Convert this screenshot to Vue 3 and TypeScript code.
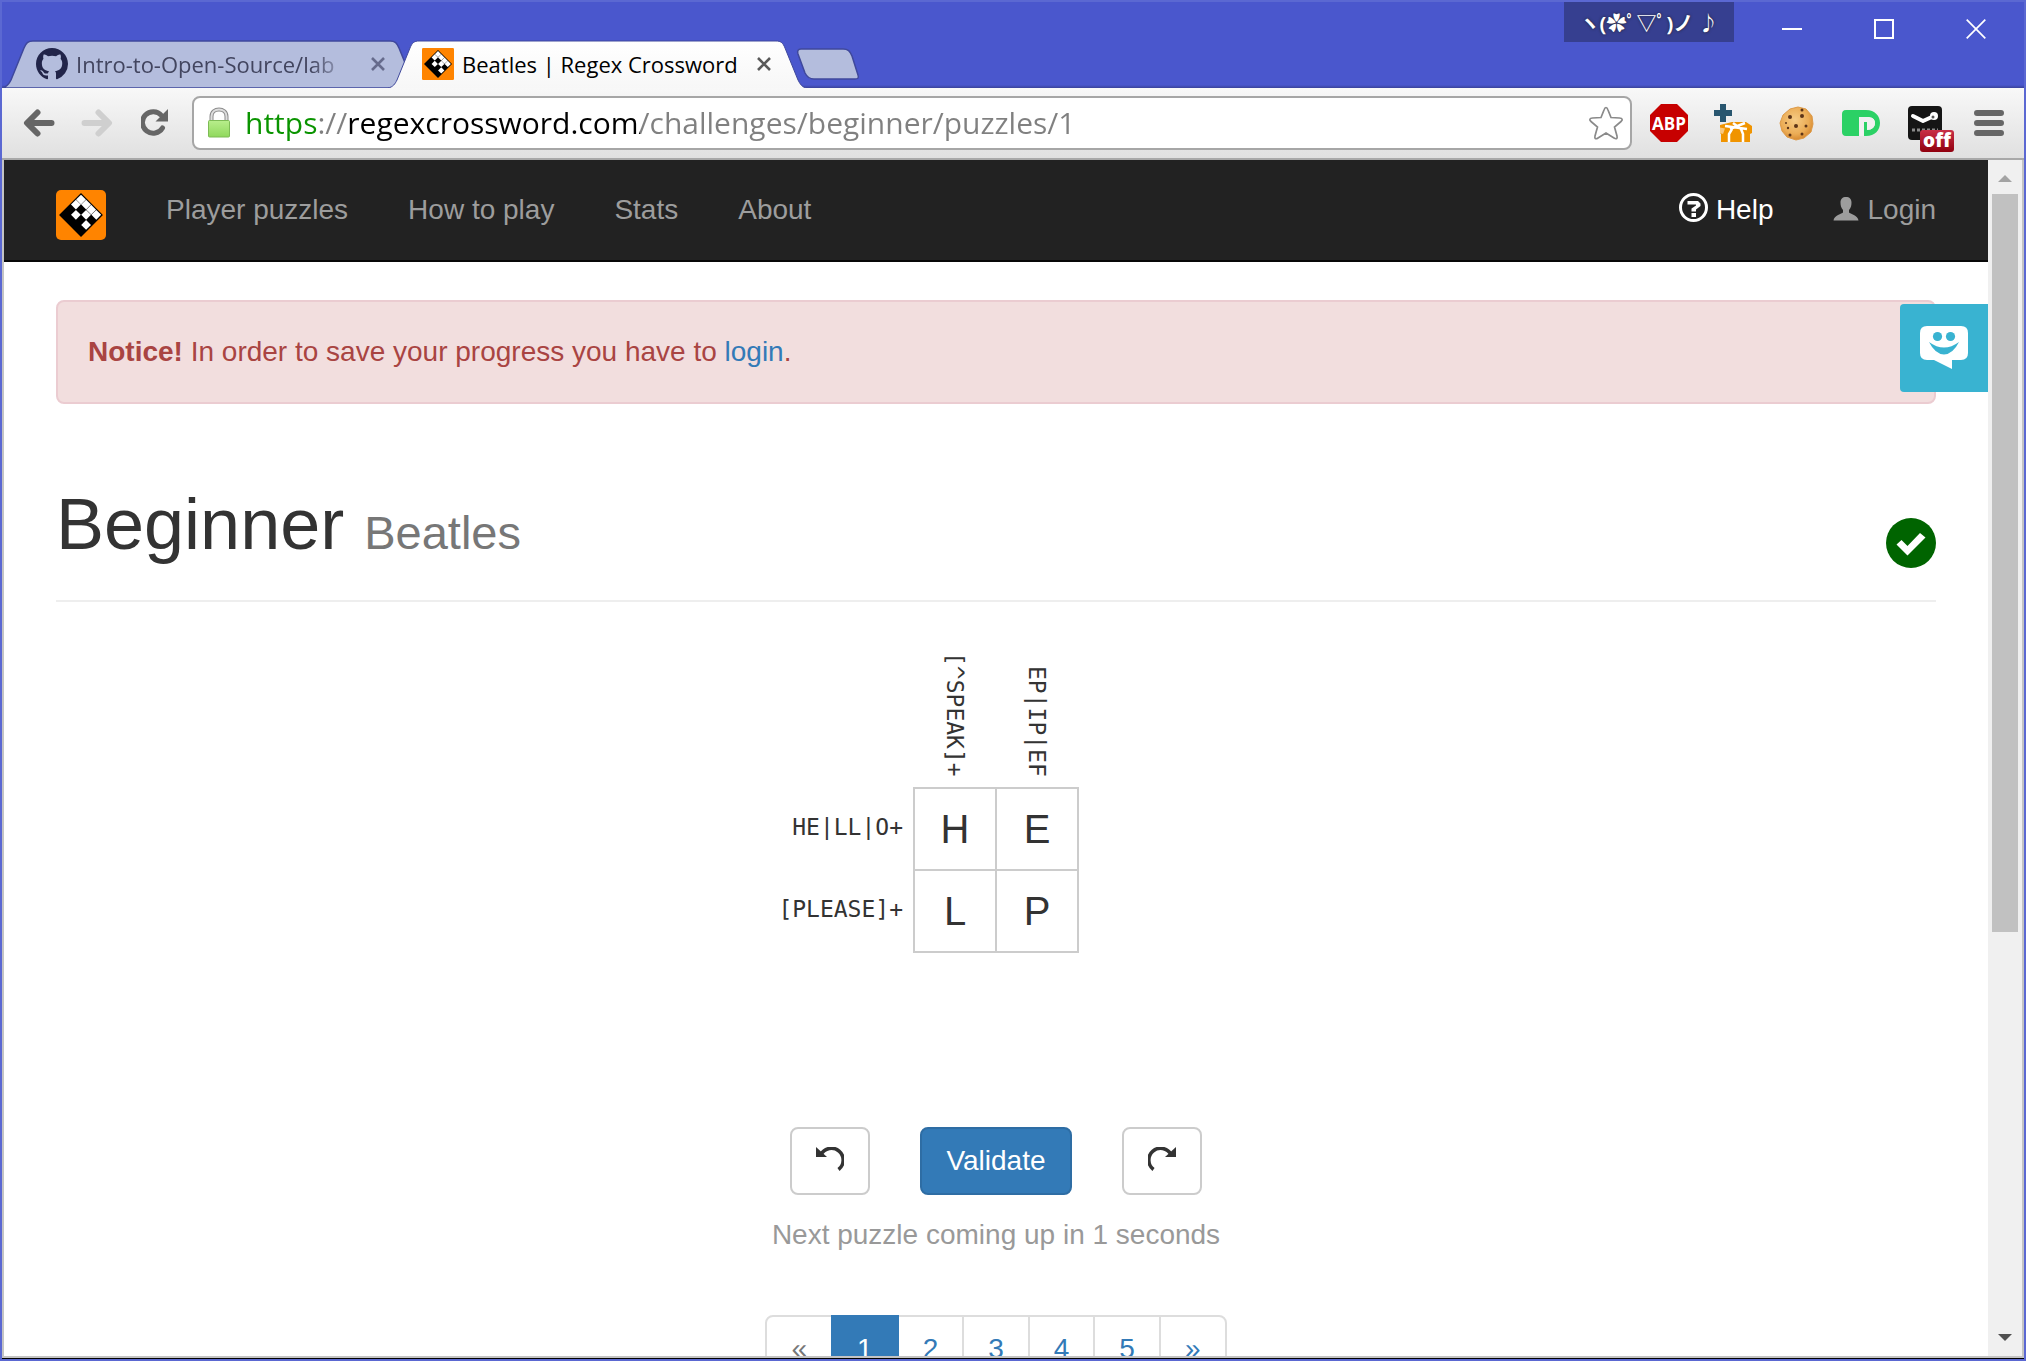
<script setup lang="ts">
import { ref } from 'vue'

interface NavItem { label: string; href: string }

const navItems: NavItem[] = [
  { label: 'Player puzzles', href: '#player-puzzles' },
  { label: 'How to play', href: '#how-to-play' },
  { label: 'Stats', href: '#stats' },
  { label: 'About', href: '#about' },
]

const address = ref('https://regexcrossword.com/challenges/beginner/puzzles/1')
const columnClues: string[] = ['[^SPEAK]+', 'EP|IP|EF']
const rowClues: string[] = ['HE|LL|O+', '[PLEASE]+']
const cells = ref<string[][]>([['H', 'E'], ['L', 'P']])
const pages: number[] = [1, 2, 3, 4, 5]
const currentPage = ref(1)
const secondsLeft = ref(1)

// White squares of the logo's 4×4 board, as [column, row]
const whiteSquares: [number, number][] = [[0, 0], [0, 1], [1, 0], [2, 0], [1, 2], [2, 1], [3, 0], [3, 2]]
const tabShape = 'M0 48 C5 47 7 44 9 40 L22 8 C24 3 26 1 31 1 H388 C393 1 395 3 397 8 L410 40 C412 44 414 47 418 48 Z'
</script>

<template>
  <div class="window">
    <header class="titlebar">
      <div class="tabs">
        <div class="tab tab-back">
          <svg class="tab-shape" viewBox="0 0 418 48" aria-hidden="true"><path :d="tabShape" fill="#b4bddd" stroke="#3f489c" stroke-width="1.5" /></svg>
          <svg class="favicon" viewBox="0 0 16 16" aria-hidden="true"><path fill="#22254a" d="M8 0C3.58 0 0 3.58 0 8c0 3.54 2.29 6.53 5.47 7.59.4.07.55-.17.55-.38 0-.19-.01-.82-.01-1.49-2.01.37-2.53-.49-2.69-.94-.09-.23-.48-.94-.82-1.13-.28-.15-.68-.52-.01-.53.63-.01 1.08.58 1.23.82.72 1.21 1.87.87 2.33.66.07-.52.28-.87.51-1.07-1.78-.2-3.64-.89-3.64-3.95 0-.87.31-1.59.82-2.15-.08-.2-.36-1.02.08-2.12 0 0 .67-.21 2.2.82.64-.18 1.32-.27 2-.27.68 0 1.36.09 2 .27 1.53-1.04 2.2-.82 2.2-.82.44 1.1.16 1.92.08 2.12.51.56.82 1.27.82 2.15 0 3.07-1.87 3.75-3.65 3.95.29.25.54.73.54 1.48 0 1.07-.01 1.93-.01 2.2 0 .21.15.46.55.38A8.013 8.013 0 0016 8c0-4.42-3.58-8-8-8z" /></svg>
          <span class="tab-title fade">Intro-to-Open-Source/lab</span>
          <button class="tab-close" type="button" aria-label="Close tab"><svg viewBox="0 0 14 14"><path d="M1 1L13 13M13 1L1 13" stroke="#666b8c" stroke-width="2.6" /></svg></button>
        </div>
        <div class="tab tab-front">
          <svg class="tab-shape" viewBox="0 0 418 48" aria-hidden="true">
            <defs><linearGradient id="tab-fill" x1="0" y1="0" x2="0" y2="1"><stop offset="0" stop-color="#ffffff" /><stop offset="1" stop-color="#f7f7f7" /></linearGradient></defs>
            <path :d="tabShape" fill="url(#tab-fill)" />
            <path d="M0 48 C5 47 7 44 9 40 L22 8 C24 3 26 1 31 1 H388 C393 1 395 3 397 8 L410 40 C412 44 414 47 418 48" fill="none" stroke="#3f489c" />
          </svg>
          <svg class="favicon" viewBox="0 0 50 50" aria-hidden="true">
            <rect width="50" height="50" rx="2" fill="#ff8400" />
            <g transform="rotate(45 25 25)">
              <rect x="9.5" y="9.5" width="31" height="31" fill="#000" />
              <rect v-for="[i, j] in whiteSquares" :key="`${i}-${j}`" :x="10.6 + i * 7.2" :y="10.6 + j * 7.2" width="7" height="7" fill="#fff" />
            </g>
          </svg>
          <span class="tab-title">Beatles | Regex Crossword</span>
          <button class="tab-close" type="button" aria-label="Close tab"><svg viewBox="0 0 14 14"><path d="M1 1L13 13M13 1L1 13" stroke="#5a5a5a" stroke-width="2.6" /></svg></button>
        </div>
        <button class="new-tab" type="button" aria-label="New tab">
          <svg viewBox="0 0 64 32"><path d="M5 1H47C52 1 54 3 56 8L62 27C63 30 62 31 59 31H18C13 31 11 29 9 25L2 6C1 3 2 1 5 1Z" fill="#b4bddd" stroke="#3f489c" stroke-width="1.5" /></svg>
        </button>
      </div>
      <div class="window-controls">
        <button class="profile" type="button">ヽ(✿ﾟ▽ﾟ)ノ ♪</button>
        <button class="control" type="button" aria-label="Minimize"><svg viewBox="0 0 20 20"><path d="M0 10H20" stroke="#fff" stroke-width="2" /></svg></button>
        <button class="control" type="button" aria-label="Maximize"><svg viewBox="0 0 20 20"><rect x="1" y="1" width="18" height="18" fill="none" stroke="#fff" stroke-width="2" /></svg></button>
        <button class="control" type="button" aria-label="Close"><svg viewBox="0 0 20 20"><path d="M.7.7L19.3 19.3M19.3.7L.7 19.3" stroke="#fff" stroke-width="1.7" /></svg></button>
      </div>
    </header>

    <div class="toolbar">
      <div class="history">
        <button class="tool" type="button" aria-label="Back"><svg width="32" height="28" viewBox="0 0 32 28"><path d="M28.5 14H5M14.5 3.500L4 14L14.500 24.500" fill="none" stroke="#666" stroke-width="6" stroke-linecap="round" stroke-linejoin="round" /></svg></button>
        <button class="tool" type="button" aria-label="Forward"><svg width="32" height="28" viewBox="0 0 32 28"><path d="M3.500 14H27M17.500 3.500L28 14L17.500 24.500" fill="none" stroke="#cfcfcf" stroke-width="6" stroke-linecap="round" stroke-linejoin="round" /></svg></button>
        <button class="tool" type="button" aria-label="Reload"><svg width="28" height="28" viewBox="0 0 28 28"><path d="M21.500 19A10.800 10.800 0 1 1 20.500 6.500" fill="none" stroke="#666" stroke-width="5" stroke-linecap="round" /><path d="M27 0V12.500H14.500Z" fill="#666" /></svg></button>
      </div>
      <div class="omnibox">
        <svg class="lock" viewBox="0 0 24 32" aria-hidden="true">
          <defs><linearGradient id="lock-fill" x1="0" y1="0" x2="0" y2="1"><stop offset="0" stop-color="#b8ee8c" /><stop offset="1" stop-color="#8fd85c" /></linearGradient></defs>
          <path d="M4.500 14V9.500C4.500 5 8 2.500 12 2.500S19.500 5 19.500 9.500V14" fill="none" stroke="#8c8c8c" stroke-width="4" />
          <path d="M4.500 14V9.500C4.500 5 8 2.500 12 2.500S19.500 5 19.500 9.500V14" fill="none" stroke="#dedede" stroke-width="2" />
          <rect x="1.500" y="13.500" width="21" height="16.500" rx="1" fill="url(#lock-fill)" stroke="#7dbb55" />
        </svg>
        <input v-model="address" class="address" type="text" aria-label="Address" spellcheck="false">
        <button class="star" type="button" aria-label="Bookmark this page"><svg viewBox="0 0 36 36"><path d="M18 2.500C19 2.500 19.500 3.500 20 5L23 12.500L31.500 13C34.500 13.200 35 14.800 33 16.500L26.500 22L29 31C29.600 33.500 28.500 34.500 26 33L18 28L10 33C7.500 34.500 6.400 33.500 7 31L9.500 22L3 16.500C1 14.800 1.500 13.200 4.500 13L13 12.500L16 5C16.500 3.500 17 2.500 18 2.500Z" fill="#fff" stroke="#8a8a8a" stroke-width="1.700" /></svg></button>
      </div>
      <div class="extensions">
        <button class="ext" type="button" aria-label="Adblock Plus"><svg viewBox="0 0 38 38"><path d="M11 0H27L38 11V27L27 38H11L0 27V11Z" fill="#c70000" /><text x="19" y="26" text-anchor="middle" font-family="Open Sans, sans-serif" font-weight="700" font-size="17" fill="#fff">ABP</text></svg></button>
        <button class="ext" type="button" aria-label="Add gift"><svg viewBox="0 0 38 38"><path d="M6 0H12V6H18V12H12V18H6V12H0V6H6Z" fill="#28566f" /><path d="M6 21L18 18H32L38 22V29L36 30V38H7V30L6 29Z" fill="#f09400" /><path d="M15 38V30L18 25M29 38V30L27 25M11 22L33 25M16 25L31 19M19 19L27 25" fill="none" stroke="#fff" stroke-width="2.500" /><path d="M6 23.500L11 24.500L9 30L6 29Z" fill="#f8c880" /></svg></button>
        <button class="ext" type="button" aria-label="Cookies"><svg viewBox="0 0 38 38"><defs><radialGradient id="cookie-fill" cx=".45" cy=".4" r=".6"><stop offset="0" stop-color="#f6cb85" /><stop offset=".7" stop-color="#ebac55" /><stop offset="1" stop-color="#d88a30" /></radialGradient></defs><path d="M20 3L28 5L34 12L35 20L33 28L26 34L18 36L9 33L4 27L2 19L5 11L12 5Z" fill="url(#cookie-fill)" stroke="#dd9a48" stroke-linejoin="round" /><g fill="#5d3418"><circle cx="12" cy="13" r="2" /><circle cx="24" cy="12" r="2" /><circle cx="18" cy="22" r="2" /><circle cx="28" cy="22" r="1.500" /><circle cx="10" cy="24" r="1.200" /><circle cx="24" cy="30" r="1.500" /><circle cx="12" cy="31" r="1.500" /><circle cx="24" cy="6" r="1.500" /><circle cx="8" cy="19" r="1" /></g></svg></button>
        <button class="ext" type="button" aria-label="Pushbullet"><svg viewBox="0 0 38 38"><path d="M4 6H24C33 6 38 12 38 19S33 32 24 32H22V26H25C30 26 33 23 33 19S30 13 25 13H17V32H4C1 32 0 30 0 28V10C0 8 1 6 4 6Z" fill="#2bd165" /><path d="M22 13H25C30 13 33 15 33 19S30 26 25 26H22V32H17V13Z" fill="#f0f0f0" /><path d="M23.500 18V26" stroke="#2bd165" stroke-width="3" /></svg></button>
        <button class="ext" type="button" aria-label="Steam"><svg viewBox="0 0 38 38"><rect x="2" y="2" width="34" height="34" rx="4" fill="#151515" /><path d="M7 12L17 17L28 12" fill="none" stroke="#fff" stroke-width="4" stroke-linecap="round" stroke-linejoin="round" /><circle cx="28" cy="12" r="4" fill="#fff" /><circle cx="27" cy="13" r="1.500" fill="#555" /><path d="M6 26H32" stroke="#8a8a8a" stroke-width="3" stroke-dasharray="3 2" /></svg><span class="badge">off</span></button>
        <button class="ext" type="button" aria-label="Menu"><svg viewBox="0 0 38 38"><path d="M7 9H31M7 19H31M7 29H31" stroke="#666" stroke-width="6" stroke-linecap="round" /></svg></button>
      </div>
    </div>

    <div class="viewport">
      <div class="page">
        <nav class="navbar">
          <a class="brand" href="#home" aria-label="Regex Crossword">
            <svg viewBox="0 0 50 50">
              <rect width="50" height="50" rx="5" fill="#ff8400" />
              <g transform="rotate(45 25 25)">
                <rect x="9.5" y="9.5" width="31" height="31" fill="#000" />
                <rect v-for="[i, j] in whiteSquares" :key="`${i}-${j}`" :x="10.6 + i * 7.2" :y="10.6 + j * 7.2" width="6.9" height="6.9" fill="#fff" />
              </g>
            </svg>
          </a>
          <a v-for="item in navItems" :key="item.label" class="nav-link" :href="item.href">{{ item.label }}</a>
          <span class="spacer" />
          <a class="nav-link help" href="#help"><svg width="29" height="29" viewBox="0 0 29 29" aria-hidden="true"><circle cx="14.500" cy="14.500" r="13" fill="none" stroke="#fff" stroke-width="3" /><path d="M8.500 8H19L21.500 10.500V13L17 16.500V18.500H12.500V15.500L17 12.500V11.500H8.500ZM12.500 20H17V24H12.500Z" fill="#fff" /></svg>Help</a>
          <a class="nav-link" href="#login"><svg width="26" height="30" viewBox="0 0 26 30" aria-hidden="true"><path transform="translate(0 4)" d="M13 0C16.500 0 18.500 2 18.500 5.500C18.500 8 18 11 16 13V15.500C17 17 25 18 25.500 23.500H.5C1 18 9 17 10 15.500V13C8 11 7.500 8 7.500 5.500C7.500 2 9.500 0 13 0Z" fill="#9d9d9d" /></svg>Login</a>
        </nav>

        <button class="chat" type="button" aria-label="Send feedback">
          <svg width="48" height="44" viewBox="0 0 48 44"><path d="M7 0H41Q48 0 48 7V27Q48 34 41 34H32V43L14 34H7Q0 34 0 27V7Q0 0 7 0Z" fill="#fff" /><g fill="#39b3d1"><circle cx="17.500" cy="10.500" r="4.600" /><circle cx="30.500" cy="10.500" r="4.600" /><path d="M9 16Q24 27 39 16Q33 28 24 28.500Q15 28 9 16Z" /></g></svg>
        </button>

        <main class="container">
          <p class="alert"><strong>Notice!</strong> In order to save your progress you have to <a href="#login">login</a>.</p>

          <div class="page-header">
            <h1>Beginner <small>Beatles</small></h1>
            <svg class="solved" viewBox="0 0 50 50" role="img" aria-label="Solved"><circle cx="25" cy="25" r="25" fill="#006400" /><path d="M10.500 26.500L15.500 22L21.500 28L34 15L39.500 19.500L21.500 37.500Z" fill="#fff" /></svg>
          </div>

          <table class="puzzle">
            <thead>
              <tr>
                <td class="side" />
                <th v-for="clue in columnClues" :key="clue" class="column-clue" scope="col"><span>{{ clue }}</span></th>
                <td class="side" />
              </tr>
            </thead>
            <tbody>
              <tr v-for="(row, r) in cells" :key="r">
                <th class="row-clue" scope="row">{{ rowClues[r] }}</th>
                <td v-for="(_, c) in row" :key="c" class="cell"><input v-model="cells[r][c]" type="text" maxlength="1" :aria-label="`Row ${r + 1}, column ${c + 1}`"></td>
                <td class="side" />
              </tr>
            </tbody>
          </table>

          <div class="actions">
            <button class="btn" type="button" aria-label="Undo"><svg viewBox="0 0 28 28"><path d="M5 8.500A11.800 11.800 0 1 1 22.500 23.500" transform="translate(0 -1)" fill="none" stroke="#333" stroke-width="3.600" /><path d="M0 0V10H11Z" fill="#333" /></svg></button>
            <button class="btn primary" type="button">Validate</button>
            <button class="btn" type="button" aria-label="Redo"><svg viewBox="0 0 28 28"><path d="M23 8.500A11.800 11.800 0 1 0 5.500 23.500" transform="translate(0 -1)" fill="none" stroke="#333" stroke-width="3.600" /><path d="M28 0V10H17Z" fill="#333" /></svg></button>
          </div>
          <p class="countdown">Next puzzle coming up in {{ secondsLeft }} seconds</p>

          <ul class="pagination">
            <li><a class="disabled" href="#previous">«</a></li>
            <li v-for="page in pages" :key="page"><a :href="`#puzzle-${page}`" :class="{ active: page === currentPage }" @click="currentPage = page">{{ page }}</a></li>
            <li><a href="#next">»</a></li>
          </ul>
        </main>
      </div>

      <div class="scrollbar" aria-hidden="true">
        <span class="arrow up" />
        <span class="thumb" />
        <span class="rest" />
        <span class="arrow down" />
      </div>
    </div>
  </div>
</template>

<style>
body {
  margin: 0;
  background: #fff;
}
</style>

<style scoped>
* {
  box-sizing: border-box;
}

button {
  display: flex;
  align-items: center;
  justify-content: center;
  padding: 0;
  border: 0;
  background: none;
  cursor: pointer;
}

svg {
  display: block;
}

.window {
  display: flex;
  flex-direction: column;
  height: 100vh;
  overflow: hidden;
  border: 2px solid #5b68d2;
  background: #4a57cd;
}

.titlebar {
  display: flex;
  flex: none;
  justify-content: space-between;
  height: 86px;
  background: linear-gradient(#4a57cd 83px, #39429a);
}

.tabs {
  display: flex;
  align-items: flex-end;
  font-family: "Open Sans", "Noto Sans", sans-serif;
  font-size: 22px;
  line-height: 32px;
}

.tab {
  position: relative;
  display: flex;
  align-items: center;
  gap: 8px;
  width: 418px;
  height: 48px;
  padding: 0 35px 0 34px;
  color: #000;
}

.tab-back {
  color: #42455f;
}

.tab-front {
  margin-left: -32px;
}

.tab-shape {
  position: absolute;
  inset: 0;
  width: 418px;
  height: 48px;
}

.favicon,
.tab-title,
.tab-close {
  position: relative;
}

.favicon {
  flex: none;
  width: 32px;
  height: 32px;
}

.tab-title {
  flex: 1;
  overflow: hidden;
  white-space: nowrap;
}

.fade {
  margin-right: 12px;
  mask-image: linear-gradient(to left, transparent, #000 40px);
}

.tab-close {
  flex: none;
  width: 14px;
  height: 14px;
}

.tab-close svg {
  width: 14px;
  height: 14px;
}

.new-tab {
  width: 64px;
  height: 32px;
  margin: 0 0 8px -10px;
}

.new-tab svg {
  width: 64px;
  height: 32px;
}

.window-controls {
  display: flex;
  align-items: flex-start;
  padding-right: 2px;
}

.profile {
  width: 170px;
  height: 40px;
  margin-right: 12px;
  background: #363f90;
  color: #fff;
  font-family: "Open Sans", "Noto Sans CJK JP", "DejaVu Sans", sans-serif;
  font-size: 20px;
  font-weight: 700;
  text-shadow: 0 0 3px #222;
  white-space: nowrap;
}

.control {
  width: 92px;
  height: 54px;
}

.control svg {
  width: 20px;
  height: 20px;
}

.toolbar {
  display: flex;
  flex: none;
  align-items: center;
  height: 72px;
  padding: 0 3px 0 8px;
  border-bottom: 2px solid #a8a8a8;
  background: linear-gradient(#f8f8f8, #e0e0e0);
}

.history,
.extensions {
  display: flex;
}

.tool {
  width: 58px;
  height: 54px;
}

.omnibox {
  display: flex;
  flex: 1;
  align-items: center;
  height: 54px;
  margin: 0 5px 0 8px;
  padding: 0 6px 0 13px;
  border: 2px solid #a6a6a6;
  border-radius: 8px;
  background: #fff;
}

.lock {
  flex: none;
  width: 24px;
  height: 32px;
  margin-right: 14px;
}

.address {
  flex: 1;
  min-width: 0;
  height: 44px;
  padding: 0;
  border: 0;
  outline: 0;
  background: linear-gradient(to right, #0a9400 71px, #808080 71px 104px, #000 104px 395px, #808080 395px);
  background-clip: text;
  color: transparent;
  caret-color: #000;
  font-family: "Open Sans", "Noto Sans", sans-serif;
  font-size: 30px;
  line-height: 44px;
}

.star svg {
  width: 36px;
  height: 36px;
}

.ext {
  position: relative;
  width: 64px;
  height: 54px;
}

.ext svg {
  width: 38px;
  height: 38px;
}

.badge {
  position: absolute;
  right: 3px;
  bottom: -2px;
  width: 34px;
  height: 22px;
  border-radius: 3px;
  background: linear-gradient(#c93048, #90000f);
  color: #fff;
  font: 800 19px/20px "Open Sans", sans-serif;
  text-align: center;
}

.viewport {
  display: flex;
  flex: 1;
  min-height: 0;
  border: solid #c4c4c4;
  border-width: 0 2px 2px;
  box-shadow: 0 1px #000;
  margin-bottom: 1px;
}

.page {
  position: relative;
  flex: 1;
  min-width: 0;
  overflow: hidden;
  background: #fff;
  color: #333;
  font-family: "Liberation Sans", Arial, sans-serif;
  font-size: 28px;
  line-height: 40px;
}

.page a {
  color: #337ab7;
  text-decoration: none;
}

.navbar {
  display: flex;
  align-items: flex-start;
  height: 102px;
  padding: 0 22px 0 52px;
  border-bottom: 2px solid #080808;
  background: #222;
}

.brand {
  width: 50px;
  margin: 30px 30px 0 0;
}

.page .nav-link {
  display: flex;
  gap: 8px;
  padding: 30px;
  color: #9d9d9d;
}

.page .help {
  color: #fff;
}

.nav-link svg {
  margin-top: 3px;
}

.spacer {
  flex: 1;
}

.chat {
  position: absolute;
  top: 144px;
  right: 0;
  width: 88px;
  height: 88px;
  border-radius: 4px 0 0 4px;
  background: #39b3d1;
}

.container {
  padding: 38px 52px 0;
}

.alert {
  margin: 0;
  padding: 30px;
  border: 2px solid #ebccd1;
  border-radius: 8px;
  background: #f2dede;
  color: #a94442;
}

.page-header {
  display: flex;
  align-items: flex-end;
  justify-content: space-between;
  margin-top: 80px;
  padding-bottom: 32px;
  border-bottom: 2px solid #eee;
}

h1 {
  margin: 0 0 4px;
  font-size: 72px;
  font-weight: 400;
  line-height: 80px;
}

h1 small {
  color: #777;
  font-size: 47px;
  line-height: 1;
}

.solved {
  width: 50px;
  height: 50px;
}

.puzzle {
  margin: 50px auto 0;
  border-collapse: collapse;
  font-family: "DejaVu Sans Mono", monospace;
  font-size: 23px;
  line-height: 32px;
}

.side {
  width: 200px;
  padding: 0;
}

.column-clue {
  height: 136px;
  padding: 0 0 10px;
  font-weight: 400;
  vertical-align: bottom;
}

.column-clue span {
  display: inline-block;
  writing-mode: vertical-rl;
  vertical-align: bottom;
}

.row-clue {
  width: 200px;
  padding: 0 10px 4px 0;
  font-weight: 400;
  text-align: right;
}

.cell {
  width: 82px;
  height: 82px;
  padding: 0;
  border: 2px solid #ccc;
}

.cell input {
  display: block;
  width: 80px;
  height: 80px;
  padding: 0;
  border: 0;
  outline: 0;
  background: none;
  color: #333;
  font: 40px/80px "Liberation Sans", Arial, sans-serif;
  text-align: center;
}

.actions {
  display: flex;
  justify-content: center;
  gap: 50px;
  margin-top: 174px;
}

.btn {
  min-width: 80px;
  height: 68px;
  padding: 0 24px;
  border: 2px solid #ccc;
  border-radius: 8px;
  background: #fff;
  font: 28px/40px "Liberation Sans", Arial, sans-serif;
}

.btn svg {
  width: 28px;
  height: 28px;
}

.btn.primary {
  border-color: #2e6da4;
  background: #337ab7;
  color: #fff;
}

.countdown {
  margin: 20px 0 60px;
  color: #999;
  text-align: center;
}

.pagination {
  display: flex;
  justify-content: center;
  margin: 0;
  padding: 0;
  list-style: none;
}

.pagination a {
  display: block;
  margin-left: -2px;
  padding: 12px 24px;
  border: 2px solid #ddd;
}

.pagination li:first-child a {
  margin-left: 0;
  border-radius: 8px 0 0 8px;
}

.pagination li:last-child a {
  border-radius: 0 8px 8px 0;
}

.pagination .disabled {
  color: #777;
}

.pagination .active {
  position: relative;
  border-color: #337ab7;
  background: #337ab7;
  color: #fff;
}

.scrollbar {
  display: flex;
  flex-direction: column;
  align-items: center;
  width: 34px;
  background: #f0f0f0;
}

.arrow {
  flex: none;
  width: 14px;
  height: 7px;
}

.up {
  margin: 15px 0 12px;
  background: #a3a3a3;
  clip-path: polygon(50% 0, 100% 100%, 0 100%);
}

.down {
  margin: 12px 0 15px;
  background: #505050;
  clip-path: polygon(0 0, 100% 0, 50% 100%);
}

.thumb {
  flex: 17;
  width: 26px;
  background: #c1c1c1;
}

.rest {
  flex: 9;
}
</style>
